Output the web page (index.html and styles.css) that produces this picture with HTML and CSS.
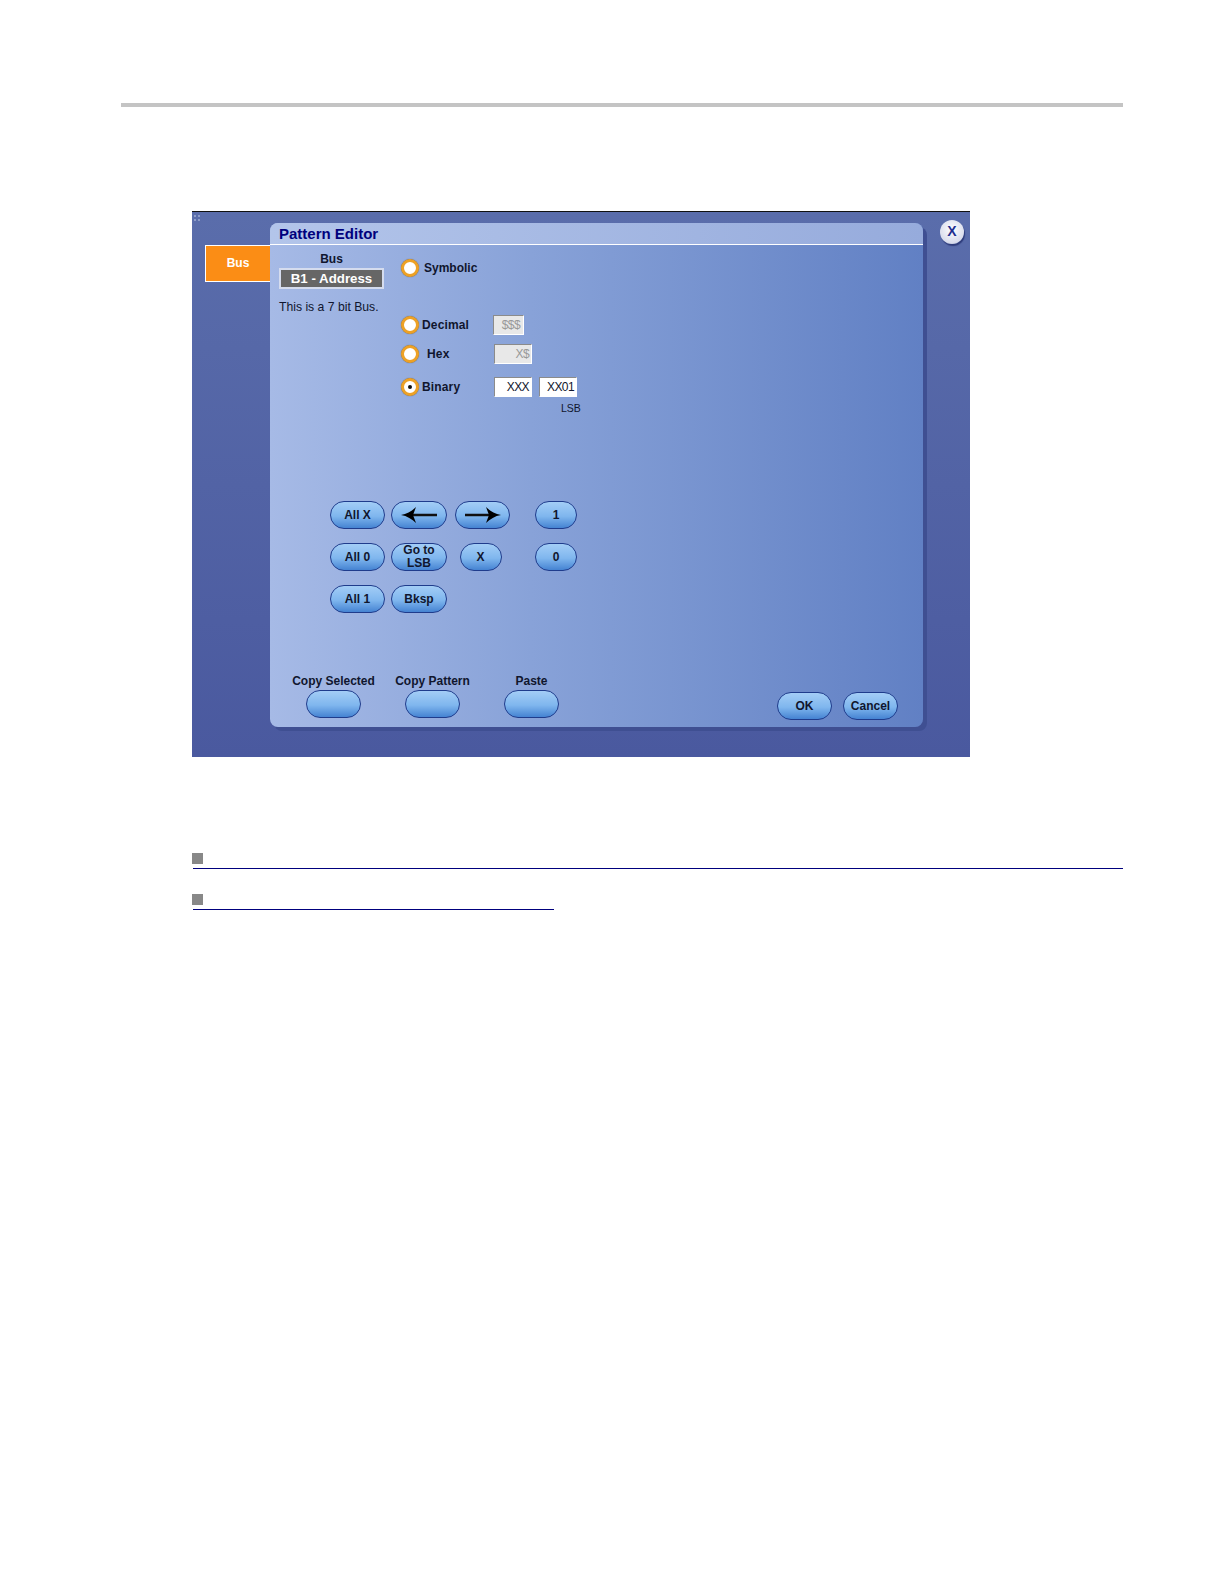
FILE: index.html
```html
<!DOCTYPE html>
<html>
<head>
    <title>Pattern Editor</title>
    <meta charset="UTF-8">
    <link rel="stylesheet" href="styles.css">
</head>
<body>
    <div class="page-rule"></div>

    <div class="shot">
        <div class="grip"></div>
        <div class="side-tab">Bus</div>

        <div class="panel">
            <div class="panel-title">Pattern Editor</div>

            <div class="upper">
                <div class="bus-col">
                    <div class="bus-label">Bus</div>
                    <div class="bus-box">B1 - Address</div>
                    <div class="bus-note">This is a 7 bit Bus.</div>
                </div>
                <div class="options">
                    <div class="opt-row symbolic">
                        <span class="radio"></span>
                        <span class="opt-label">Symbolic</span>
                    </div>
                    <div class="opt-row decimal">
                        <span class="radio"></span>
                        <span class="opt-label">Decimal</span>
                        <span class="field off narrow">$$$</span>
                    </div>
                    <div class="opt-row hex">
                        <span class="radio"></span>
                        <span class="opt-label">Hex</span>
                        <span class="field off">X$</span>
                    </div>
                    <div class="opt-row binary">
                        <span class="radio on"></span>
                        <span class="opt-label">Binary</span>
                        <span class="field">XXX</span>
                        <span class="field">XX01</span>
                    </div>
                    <div class="lsb">LSB</div>
                </div>
            </div>

            <div class="keypad">
                <button class="pill">All X</button>
                <button class="pill wide">
                    <svg width="38" height="18" viewBox="0 0 38 18"><path d="M37 9H9" stroke="#111" stroke-width="2.500"/><path d="M1 9C7 8 12 5 16 1L13 9l3 8C12 13 7 10 1 9z" fill="#000"/></svg>
                </button>
                <button class="pill">
                    <svg width="38" height="18" viewBox="0 0 38 18"><path d="M1 9h28" stroke="#111" stroke-width="2.500"/><path d="M37 9C31 8 26 5 22 1l3 8-3 8C26 13 31 10 37 9z" fill="#000"/></svg>
                </button>
                <button class="pill small">1</button>
                <button class="pill">All 0</button>
                <button class="pill wide stacked">Go to<br>LSB</button>
                <button class="pill small center">X</button>
                <button class="pill small">0</button>
                <button class="pill">All 1</button>
                <button class="pill wide">Bksp</button>
            </div>

            <div class="lower">
                <div class="copy-group">
                    <div class="copy-label">Copy Selected</div>
                    <button class="pill"></button>
                </div>
                <div class="copy-group">
                    <div class="copy-label">Copy Pattern</div>
                    <button class="pill"></button>
                </div>
                <div class="copy-group">
                    <div class="copy-label">Paste</div>
                    <button class="pill"></button>
                </div>
                <div class="actions">
                    <button class="pill">OK</button>
                    <button class="pill">Cancel</button>
                </div>
            </div>
        </div>

        <div class="close-btn">X</div>
    </div>

    <ul class="links">
        <li><a class="link-line full"></a></li>
        <li><a class="link-line short"></a></li>
    </ul>
</body>
</html>
```

FILE: styles.css
```css
body {
    margin: 0;
    padding: 103px 101px 0 121px;
    background: #fff;
    font-family: "Liberation Sans", Arial, sans-serif;
    font-size: 12px;
    color: #10162e;
}
.page-rule {
    height: 4px;
    background: #c4c4c4;
}

/* screenshot */
.shot {
    position: relative;
    display: flex;
    align-items: flex-start;
    box-sizing: border-box;
    width: 778px;
    height: 546px;
    margin: 104px 0 0 71px;
    padding: 11px 0 0 13px;
    border-top: 1px solid #111;
    background: linear-gradient(#5a6dab, #4a599f);
}
.grip {
    position: absolute;
    left: 1px;
    top: 2px;
    width: 8px;
    height: 8px;
    background: radial-gradient(#8d9cc8 40%, transparent 45%) 0 0 / 4px 4px;
}
.side-tab {
    box-sizing: border-box;
    width: 65px;
    height: 37px;
    margin-top: 22px;
    border: 1px solid #fff;
    border-right: none;
    background: #fb8d15;
    color: #fff;
    font-weight: bold;
    line-height: 34px;
    text-align: center;
}
.panel {
    box-sizing: border-box;
    width: 653px;
    height: 504px;
    border-radius: 8px;
    background: linear-gradient(90deg, #a6bae6, #88a2d8 40%, #6180c4);
    box-shadow: 4px 4px 0 #3f4f92;
}
.panel-title {
    height: 21px;
    padding-left: 9px;
    border-bottom: 1px solid #fff;
    border-radius: 8px 8px 0 0;
    background: linear-gradient(90deg, #b3c5ea, #96abdc);
    color: #00007d;
    font-size: 15px;
    font-weight: bold;
    line-height: 22px;
}

/* top part */
.upper {
    display: flex;
    height: 169px;
}
.bus-col {
    width: 131px;
    padding: 7px 0 0 9px;
    box-sizing: border-box;
}
.bus-label {
    width: 105px;
    font-weight: bold;
    line-height: 14px;
    text-align: center;
}
.bus-box {
    box-sizing: border-box;
    width: 105px;
    height: 21px;
    margin-top: 2px;
    border: 2px solid #d5dcee;
    background: #666;
    color: #fff;
    font-size: 13.3px;
    font-weight: bold;
    line-height: 17px;
    text-align: center;
}
.bus-note {
    margin-top: 11px;
    line-height: 14px;
    font-size: 12.2px;
    white-space: nowrap;
}
.options {
    padding-top: 14px;
}
.opt-row {
    display: flex;
    align-items: center;
    gap: 3px;
    height: 20px;
}
.opt-label {
    width: 69px;
    font-weight: bold;
    letter-spacing: 0.15px;
}
.symbolic {
    height: 18px;
}
.symbolic .opt-label {
    padding-left: 2px;
    letter-spacing: 0;
}
.decimal {
    margin-top: 38px;
}
.decimal .field {
    margin-left: -1px;
}
.hex {
    margin-top: 9px;
}
.hex .opt-label {
    box-sizing: border-box;
    padding-left: 5px;
}
.binary {
    margin-top: 13px;
}
.binary .field + .field {
    margin-left: 4px;
}
.radio {
    position: relative;
    box-sizing: border-box;
    flex: none;
    width: 18px;
    height: 18px;
    border: 3px solid #eda125;
    border-radius: 50%;
    background: #fff;
    box-shadow: 0 0 1px #555;
}
.radio.on::after {
    content: "";
    position: absolute;
    left: 4px;
    top: 4px;
    width: 4px;
    height: 4px;
    border-radius: 50%;
    background: #111;
}
.field {
    box-sizing: border-box;
    width: 38px;
    height: 20px;
    padding-right: 2px;
    border: 1px solid #fff;
    border-top-color: #8b8b8b;
    border-left-color: #8b8b8b;
    background: #fff;
    letter-spacing: -0.6px;
    line-height: 18px;
    text-align: right;
}
.field.off {
    background: #e8e8e8;
    color: #999;
}
.field.narrow {
    width: 31px;
    padding-right: 3px;
}
.lsb {
    margin: 5px 0 0 160px;
    font-size: 10.5px;
    line-height: 12px;
}

/* buttons */
.pill {
    box-sizing: border-box;
    width: 55px;
    height: 28px;
    padding: 0;
    border: 1.5px solid #1f3c8c;
    border-radius: 14px;
    background: linear-gradient(#a3cdf6, #7fb6ee 55%, #4583d2);
    color: #10162e;
    font-family: inherit;
    font-size: 12px;
    font-weight: bold;
    line-height: 13px;
}
.pill svg {
    display: block;
    margin: 0 auto;
}
.pill.wide {
    width: 56px;
}
.pill.small {
    width: 42px;
}
.pill.center {
    justify-self: center;
}
.keypad {
    display: grid;
    grid-template-columns: 55px 56px 55px 42px;
    grid-auto-rows: 28px;
    column-gap: 6px;
    row-gap: 14px;
    width: 247px;
    margin: 87px 0 0 60px;
}
.keypad > :nth-child(4),
.keypad > :nth-child(8) {
    margin-left: 21px;
}
.keypad > :nth-child(3) {
    margin-left: 2px;
}
.lower {
    display: flex;
    align-items: flex-end;
    margin-top: 62px;
    padding: 0 25px 0 14px;
}
.copy-group {
    width: 99px;
    text-align: center;
}
.copy-label {
    height: 15px;
    line-height: 13px;
    white-space: nowrap;
    font-weight: bold;
}
.actions {
    display: flex;
    gap: 11px;
    margin-left: auto;
}

/* close button sits over the screenshot corner */
.close-btn {
    position: absolute;
    left: 748px;
    top: 8px;
    width: 24px;
    height: 24px;
    border-radius: 50%;
    background: radial-gradient(circle at 50% 40%, #fff, #d8dcec 70%, #8e98c0);
    box-shadow: 1px 2px 1px #2f3d7c;
    color: #1f2f8f;
    font-size: 14px;
    font-weight: bold;
    line-height: 23px;
    text-align: center;
}

/* bullet links */
.links {
    margin: 96px 0 0 71px;
    padding: 0;
    list-style: none;
}
.links li {
    position: relative;
    height: 16px;
    margin-bottom: 25px;
}
.links li::before {
    content: "";
    position: absolute;
    left: 0;
    top: 0;
    width: 11px;
    height: 11px;
    background: #888;
}
.link-line {
    display: block;
    position: absolute;
    left: 1px;
    top: 15px;
    height: 1px;
    background: #00007d;
}
.link-line.full {
    width: 930px;
}
.link-line.short {
    width: 361px;
}
```
